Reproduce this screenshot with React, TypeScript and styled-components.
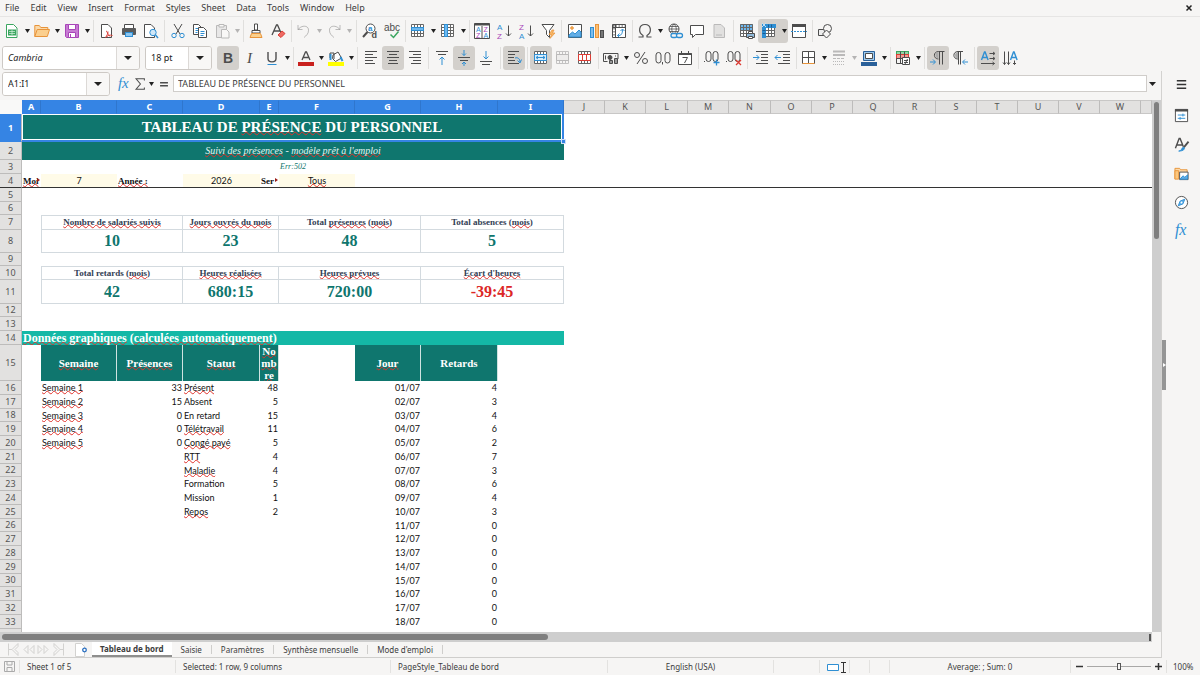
import React from 'react';
import styled, { createGlobalStyle, css } from 'styled-components';

const DARK = '#4d4d4d';
const BLUE = '#2f8fd3';
const PURPLE = '#a845b8';
const RED = '#dc3c34';
const ORANGE = '#e8943a';
const GREEN = '#3ba660';
const TEAL = '#0f766e';
const SANS = '"Noto Sans", "Open Sans", sans-serif';
const SERIF = '"Liberation Serif", serif';

const GlobalStyle = createGlobalStyle`
  *, *::before, *::after { box-sizing: border-box; }
  body {
    margin: 0;
    background: #f6f5f4;
    color: #3c3c3c;
    font-family: ${SANS};
    font-size: 9px;
    line-height: 12px;
  }
  button, input { font: inherit; color: inherit; margin: 0; padding: 0; border: 0; background: none; }
`;

/* ---------- shell ---------- */

const Window = styled.div`
  display: flex;
  flex-direction: column;
  height: 100vh;
  min-height: 400px;
  overflow: hidden;
`;

const MenuBar = styled.nav`
  display: flex;
  align-items: center;
  gap: 1px;
  height: 17px;
  flex: none;
  padding: 0 6px 0 0;
  border-bottom: 1px solid #e6e5e4;
`;

const MenuItem = styled.button`
  padding: 0 5px;
  height: 16px;
  white-space: nowrap;
`;

const CloseButton = styled.button`
  margin-left: auto;
  width: 10px;
  height: 16px;
  display: grid;
  place-items: center;
`;

const Toolbar = styled.div<{ $inset: number }>`
  display: flex;
  align-items: center;
  flex: none;
  height: 27px;
  padding-left: ${(p) => p.$inset}px;
  overflow: hidden;
`;

const ToolButton = styled.button<{ $active?: boolean; $joined?: boolean }>`
  flex: none;
  width: 22px;
  height: 24px;
  display: grid;
  place-items: center;
  border-radius: ${(p) => (p.$joined ? '3px 0 0 3px' : '3px')};
  background: ${(p) => (p.$active ? '#d3d0cc' : 'transparent')};
`;

const ArrowButton = styled.button<{ $active?: boolean; $dim?: boolean }>`
  flex: none;
  width: 8px;
  height: 24px;
  display: grid;
  place-items: center;
  opacity: ${(p) => (p.$dim ? 0.3 : 1)};
  border-radius: 0 3px 3px 0;
  background: ${(p) => (p.$active ? '#d3d0cc' : 'transparent')};
`;

const Separator = styled.span<{ $w: number }>`
  flex: none;
  width: ${(p) => p.$w}px;
  height: 22px;
  background: linear-gradient(#e0dfdd, #e0dfdd) center / 1px 100% no-repeat;
`;

const Combo = styled.div<{ $w: number; $gap: number }>`
  display: flex;
  flex: none;
  width: ${(p) => p.$w}px;
  height: 24px;
  margin-right: ${(p) => p.$gap}px;
  border: 1px solid #cdc9c5;
  border-radius: 3px;
  overflow: hidden;
`;

const ComboInput = styled.input<{ $italic?: boolean }>`
  flex: 1;
  min-width: 0;
  padding: 0 5px;
  background: #fff;
  color: #222;
  font-style: ${(p) => (p.$italic ? 'italic' : 'normal')};
`;

const ComboButton = styled.button`
  width: 23px;
  border-left: 1px solid #dcd9d6;
  background: #f8f7f6;
  display: grid;
  place-items: center;
`;

const Main = styled.div`
  display: flex;
  flex: 1;
  min-height: 0;
`;

const Workspace = styled.div`
  display: flex;
  flex-direction: column;
  flex: 1;
  min-width: 0;
`;

const FormulaBar = styled.div`
  display: flex;
  align-items: center;
  flex: none;
  height: 29px;
  padding: 0 5px 4px 2px;
`;

const FormulaTool = styled.button<{ $w: number }>`
  flex: none;
  width: ${(p) => p.$w}px;
  height: 20px;
  display: grid;
  place-items: center;
`;

const FormulaInput = styled.input`
  flex: 1;
  min-width: 0;
  height: 17px;
  padding: 0 4px;
  margin-right: 1px;
  background: #fff;
  border: 1px solid #d0cdca;
`;

/* ---------- sheet ---------- */

const SheetRow = styled.div`
  display: flex;
  flex: 1;
  min-height: 0;
`;

const SheetView = styled.div`
  flex: 1;
  min-width: 0;
  overflow: hidden;
  background: #fff;
`;

const VerticalTrack = styled.div`
  flex: none;
  width: 9px;
  padding: 2px;
  background: #cecece;
`;

const VerticalThumb = styled.div`
  width: 5px;
  height: 26%;
  border-radius: 3px;
  background: #7f7f7f;
`;

const HorizontalTrack = styled.div`
  flex: none;
  display: flex;
  align-items: center;
  justify-content: space-between;
  height: 10px;
  margin-right: 9px;
  padding: 0 1px 0 2px;
  background: #cecece;
`;

const HorizontalThumb = styled.div`
  width: 47.5%;
  height: 6px;
  border-radius: 3px;
  background: #7f7f7f;
`;

const SplitMark = styled.span`
  width: 2px;
  height: 7px;
  background: #555;
`;

const Grid = styled.table`
  width: 100%;
  table-layout: fixed;
  border-spacing: 0;
  font-family: Lato, sans-serif;
  font-size: 9px;
  line-height: 12px;
  color: #111;
`;

const ColumnHead = styled.th<{ $selected?: boolean }>`
  height: 14px;
  padding: 0;
  font: 9px/12px ${SANS};
  color: #555;
  background: #e2e1e0;
  border-right: 1px solid #bdbcbb;
  border-bottom: 1px solid #c8c7c6;
  border-top: 1px solid #c8c7c6;
  overflow: hidden;
  ${(p) => p.$selected && css`
    font-weight: 700;
    color: #fff;
    background: #3584e4;
    border-color: #3584e4;
    border-right-color: #2f76cd;
  `}
`;

const Corner = styled.td`
  padding: 0;
  background: #f9f9f8;
`;

const RowHead = styled.th<{ $selected?: boolean }>`
  padding: 0;
  font: ${(p) => (p.$selected ? 700 : 400)} 9px/12px ${SANS};
  color: ${(p) => (p.$selected ? '#fff' : '#555')};
  background: ${(p) => (p.$selected ? '#3584e4' : '#e2e1e0')};
  border-right: 1px solid #bdbcbb;
  border-bottom: 1px solid ${(p) => (p.$selected ? '#3584e4' : '#bdbcbb')};
`;

const Row = styled.tr<{ $h: number; $frozen?: boolean }>`
  height: ${(p) => p.$h}px;
  ${(p) => p.$frozen && css`
    & > * { border-bottom: 1px solid #333; }
  `}
`;

const Cell = styled.td<{ $align?: 'left' | 'center' | 'right' }>`
  padding: 0 1px;
  text-align: ${(p) => p.$align ?? 'left'};
  white-space: nowrap;
  overflow: hidden;
`;

const TitleCell = styled(Cell)`
  position: relative;
  overflow: visible;
  background: ${TEAL};
  color: #fff;
  font: 700 15px/20px ${SERIF};
  box-shadow: inset 0 0 0 1px #fff;
  border-right: 2px solid #3584e4;
  border-bottom: 2px solid #3584e4;
`;

const FillHandle = styled.span`
  position: absolute;
  right: -4px;
  bottom: -4px;
  width: 5px;
  height: 5px;
  background: #3584e4;
  border: 1px solid #cfe0f7;
`;

const SubtitleCell = styled(Cell)`
  background: ${TEAL};
  color: #e3f4f2;
  font: italic 10px/12px ${SERIF};
`;

const ErrorCell = styled(Cell)`
  color: ${TEAL};
  font: italic 8px/12px ${SERIF};
`;

const FilterLabel = styled(Cell)`
  position: relative;
  font: 700 9px/12px ${SERIF};
`;

/* Marks a label that is wider than its column. */
const OverflowMark = styled.span`
  position: absolute;
  right: 1px;
  top: 4px;
  border: solid transparent;
  border-width: 2px 0 2px 3px;
  border-left-color: #9b1c16;
`;

const FilterValue = styled(Cell)`
  background: #fffbe8;
`;

const KpiLabel = styled(Cell)<{ $first?: boolean }>`
  color: #334155;
  font: 700 9px/11px ${SERIF};
  border: solid #d3dadf;
  border-width: 1px 1px 1px ${(p) => (p.$first ? 1 : 0)}px;
`;

const KpiValue = styled(KpiLabel)<{ $negative?: boolean }>`
  color: ${(p) => (p.$negative ? '#dc2626' : TEAL)};
  font-size: 16px;
  line-height: 20px;
  border-top-width: 0;
`;

const SectionCell = styled(Cell)`
  background: #14b8a6;
  color: #fff;
  font: 700 12px/13px ${SERIF};
`;

const DataHead = styled(Cell)`
  background: ${TEAL};
  color: #fff;
  font: 700 11px/12px ${SERIF};
  border: solid #cfe3e1;
  border-width: 0 1px 0 0;
  white-space: normal;
  word-break: break-all;
`;

const Misspelt = styled.span`
  text-decoration: underline wavy #e0322b 1px;
  text-decoration-skip-ink: none;
  text-underline-offset: -1px;
`;

/* ---------- side and bottom bars ---------- */

const Splitter = styled.div`
  flex: none;
  display: flex;
  align-items: center;
  width: 5px;
  border-left: 1px solid #d3d2d0;
`;

const SplitterHandle = styled.button`
  width: 4px;
  height: 50px;
  display: grid;
  place-items: center;
  background: #959595;
`;

const Sidebar = styled.aside`
  flex: none;
  width: 34px;
  display: flex;
  flex-direction: column;
  align-items: center;
  gap: 5px;
  padding: 1px 4px 0 0;
  & > :first-child { margin-bottom: 2px; }
`;

const TabBar = styled.div`
  display: flex;
  align-items: stretch;
  flex: none;
  height: 16px;
  padding-left: 6px;
  font-size: 8px;
  border-bottom: 1px solid #cfcecc;
`;

const TabNav = styled.button`
  width: 15px;
  display: grid;
  place-items: center;
`;

const AddSheet = styled.button`
  width: 26px;
  padding-left: 3px;
  display: grid;
  place-items: center;
`;

const Tab = styled.button<{ $active?: boolean }>`
  padding: 0 10px 0 9px;
  white-space: nowrap;
  ${(p) => p.$active ? css`
    padding: 0 8px;
    font-weight: 700;
    background: #fff;
    border-bottom: 2px solid #8e8e8d;
  ` : css`
    background: linear-gradient(#cfcecc, #cfcecc) right center / 1px 9px no-repeat;
  `}
`;

const StatusBar = styled.footer`
  display: grid;
  grid-template-columns: 20px 156px 215px 217px 166px 46px 30px 20px 20px 1fr 96px 33px;
  align-items: center;
  flex: none;
  height: 17px;
  font-size: 8px;
`;

const StatusItem = styled.div<{ $center?: boolean }>`
  height: 13px;
  padding: 0 7px;
  display: flex;
  align-items: center;
  justify-content: ${(p) => (p.$center ? 'center' : 'flex-start')};
  border-right: 1px solid #e3e2e0;
  white-space: nowrap;
  &:last-child { border: 0; padding: 0 6px; }
`;

const ZoomControl = styled.div`
  display: flex;
  align-items: center;
  justify-content: space-between;
  height: 13px;
  padding: 0 4px;
  border-right: 1px solid #e3e2e0;
`;

const ZoomSlider = styled.input`
  appearance: none;
  width: 64px;
  height: 12px;
  background: linear-gradient(#a9a8a7, #a9a8a7) center / 100% 1px no-repeat;
  &::-webkit-slider-thumb {
    appearance: none;
    width: 4px;
    height: 7px;
    background: #f6f5f4;
    border: 1px solid #555;
  }
`;

const ZoomStep = styled.button`
  display: grid;
  place-items: center;
  width: 8px;
  height: 12px;
`;

/* ---------- icons ---------- */

const Svg = styled.svg<{ $dim?: boolean }>`
  display: block;
  overflow: visible;
  opacity: ${(p) => (p.$dim ? 0.35 : 1)};
  text { stroke: none; font-family: "Liberation Sans", sans-serif; }
  .serif { font-family: ${SERIF}; }
`;

type Drawing = React.ReactNode;

const page = (x = 2.5, y = 1.5, w = 10, h = 13) => (
  <path d={`M${x} ${y}h${w - 3.5}l3.5 3.5v${h - 3.5}h-${w}z`} fill="#fff" />
);
const lines = (rows: [number, number, number][]) => (
  <path d={rows.map(([x, y, w]) => `M${x} ${y}h${w}`).join('')} />
);
/* A 12 by 12 sheet of four columns and four rows. */
const sheetGrid = (stroke = '#666') => (
  <path d="M1.500 1.500h12v12h-12zM1.500 4.500h12M1.500 7.500h12M1.500 10.500h12M4.500 1.500v12M7.500 1.500v12M10.500 1.500v12" stroke={stroke} />
);
const sheetPaper = <rect x="1" y="1" width="13" height="13" fill="#fff" stroke="none" />;
const sortArrow = <path d="M12.500 2.500v10.500M10 10.500l2.500 2.500 2.500-2.500" />;

const drawings: Record<string, Drawing> = {
  new: <g><path d="M2.500 1.500h7l3.500 3.500v9.500h-10.500z" fill="#fff" stroke={GREEN} /><rect x="4" y="6.500" width="8" height="6" fill={GREEN} stroke="none" /><path d="M5 8.500h6M5 10.500h6M8 7v5" stroke="#d9f2df" strokeWidth=".7" /></g>,
  open: <g stroke={ORANGE}><path d="M.8 13.500v-11h4.500l1.500 2h7v2.500" fill="#fbd9a8" /><path d="M.8 13.500l2.400-7h12.300l-2.200 7z" fill="#fbcf8e" /></g>,
  save: <g stroke={PURPLE}><path d="M1.500 1.500h13v13h-12l-1-1z" fill="#c77bd3" /><path d="M4.500 1.500h7v5h-7z" fill="#fff" /><path d="M4.500 9.500h7v5h-7z" fill="#fff" /><path d="M6.500 11v3" /></g>,
  pdf: <g>{page()}<path d="M7 8c1.500 0 1 3 4 5.500M13.500 12.500c-3-1-5 0-6.500 2M9 8.500c0 2-1 4-2.500 6" stroke={RED} /></g>,
  print: <g><path d="M3.500 5v-3.500h9v3.500" fill="#fff" /><rect x="1" y="5" width="14" height="7" rx="1" fill="#5a5a5a" stroke="none" /><rect x="4.500" y="9.500" width="7" height="4" fill="#8cc5ef" stroke={BLUE} /></g>,
  preview: <g>{page(1.5)}<circle cx="10" cy="9.500" r="3.200" fill="#cfe7f8" stroke={BLUE} /><path d="M12.500 12l2.500 3" stroke={BLUE} strokeWidth="1.500" /></g>,
  cut: <g><path d="M4 1l6 10M12 1l-6 10" /><circle cx="4" cy="12.500" r="2.200" stroke={BLUE} /><circle cx="12" cy="12.500" r="2.200" stroke={BLUE} /></g>,
  copy: <g><path d="M1.500 1.500h5l3 3v7h-8z" fill="#fff" /><path d="M3.500 5.500h3M3.500 7.500h3M3.500 9.500h2" stroke={BLUE} /><path d="M6.500 4.500h5l3 3v7h-8z" fill="#fff" /><path d="M8.500 8.500h4M8.500 10.500h4M8.500 12.500h3" stroke={BLUE} /></g>,
  paste: <g><path d="M2.500 2.500h10v12h-10z" fill="#d0d0d0" /><path d="M5 1.500h5v2.500h-5z" fill="#fff" /><path d="M7.500 6.500h5l2.500 2.500v6h-7.500z" fill="#fff" /></g>,
  brush: <g><path d="M6.500 1h3v6h-3z" fill="#fff" /><path d="M4 7.500h8v2.500h-8z" fill="#fff" /><path d="M3.500 10.500h9l1.500 4h-12z" fill="#fbd08d" stroke={ORANGE} /></g>,
  clear: <g><path d="M2 12l4.500-10h1l4 9M4 8h6" strokeWidth="1.300" /><path d="M8 12l4-4 3 2.500-4 4z" fill="#ee6b64" stroke={RED} /></g>,
  undo: <path d="M2 6.500c4-5 11-4 10.500 1 0 3-2 5-4.500 7M2 2v4.500h4.500" />,
  redo: <path d="M14 6.500c-4-5-11-4-10.500 1 0 3 2 5 4.500 7M14 2v4.500h-4.500" />,
  find: <g><circle cx="8.500" cy="5.500" r="4.500" fill="#fff" /><path d="M5.500 9l-4.500 5" strokeWidth="2" /><text x="6" y="7.500" fontSize="8" fill={BLUE} fontWeight="700">a</text><text x="9.500" y="15" fontSize="9" fill={DARK} fontWeight="700">d</text></g>,
  spell: <g><text x="0" y="8" fontSize="10" fill={DARK}>abc</text><path d="M6.500 11.500l3 3 5-6" stroke={GREEN} strokeWidth="1.500" /></g>,
  rows: <g>{sheetPaper}{sheetGrid()}<rect x="1.500" y="4.500" width="12" height="3" fill="#6db8ef" stroke={BLUE} /></g>,
  cols: <g>{sheetPaper}{sheetGrid()}<rect x="4.500" y="1.500" width="3" height="12" fill="#6db8ef" stroke={BLUE} /></g>,
  sort: <g><path d="M.5.500h15v15h-15zM8 3v12" fill="#fff" /><path d="M.5 1.500h15" strokeWidth="2" /><g fontSize="7"><text x="2" y="8.500" fill={BLUE}>A</text><text x="2" y="15" fill={PURPLE}>Z</text><text x="9.500" y="8.500" fill={PURPLE}>Z</text><text x="9.500" y="15" fill={BLUE}>A</text></g></g>,
  asc: <g fontSize="8"><text x="1" y="6.500" fill={BLUE}>A</text><text x="1" y="15.500" fill={PURPLE}>Z</text>{sortArrow}</g>,
  desc: <g fontSize="8"><text x="1" y="6.500" fill={PURPLE}>Z</text><text x="1" y="15.500" fill={BLUE}>A</text>{sortArrow}</g>,
  filter: <g><path d="M2 1.500h12l-4.500 6v7l-3-3v-4z" fill="#fff" /><path d="M12 7l-3 4.500h2.500l-1.500 4 5-5.500h-2.500l1.500-3z" fill="#f8b563" stroke={ORANGE} strokeWidth=".7" /></g>,
  image: <g><path d="M1.500 1.500h13v13h-13z" fill="#fff" /><path d="M2 14v-2l3.500-3 2.500 2 4-4 2 2v5z" fill="#63aee6" stroke={BLUE} /><circle cx="5" cy="5" r="1.300" fill="#f8b563" stroke={ORANGE} /></g>,
  chart: <g><rect x="1.500" y="4.500" width="3" height="10" fill="#7dbdec" stroke={BLUE} /><rect x="6.500" y="1.500" width="3" height="13" fill="#fbc076" stroke={ORANGE} /><rect x="11.500" y="7.500" width="3" height="7" fill="#777" stroke={DARK} /></g>,
  pivot: <g><path d="M1.500 1.500h13v13h-13z" fill="#fff" /><path d="M1.500 4.500h13M4.500 1.500v13" /><path d="M1.500 3h13M3 2v12" strokeDasharray="1.500 1.500" /><path d="M6.500 12.500c4 .5 5-2 5-6M9.500 8l2-2 2 2M8.500 10.500l-2 2 2 2" stroke={BLUE} /></g>,
  omega: <path d="M1.500 14h4.500v-1.500c-5-3-4.500-11 2-11s7 8 2 11v1.500h4.500" strokeWidth="1.200" />,
  link: <g><circle cx="7" cy="6" r="5" fill="#fff" /><path d="M2 6h10M3 3.500h8M3 8.500h8M7 1c-3 3-3 7 0 10M7 1c3 3 3 7 0 10" strokeWidth=".8" /><g stroke={BLUE} strokeWidth="1.300" fill="#f6f5f4"><rect x="4" y="10.500" width="6" height="4" rx="2" /><rect x="9.500" y="10.500" width="6" height="4" rx="2" /></g></g>,
  comment: <path d="M1.500 2.500h13v9h-8l-3 3v-3h-2z" fill="#fff" />,
  headers: <g><path d="M3 1.500h7l3.500 3.500v9.500h-10.500z" fill="#bbb" /><path d="M5 12h6" /></g>,
  printArea: <g>{sheetPaper}<rect x="1" y="1" width="13" height="6" fill="#6db8ef" stroke="none" />{sheetGrid()}<path d="M7.500 10.500h8v4h-8z" fill="#8fb9da" /><path d="M9.500 8.500h4v2h-4zM9.500 13.500h4v2h-4z" fill="#fff" /></g>,
  freeze: <g>{sheetPaper}{sheetGrid()}<path d="M1 1h14v4h-10v10h-4z" fill={BLUE} stroke="none" /><path d="M1.500 7.500h3M1.500 10.500h3M7.500 1.500v3M10.500 1.500v3" stroke="#1c5c93" /><path d="M1 0l4 4M5 0l-4 4" stroke="#bfe0f7" /></g>,
  split: <g><path d="M1.500 1.500h13v13h-13z" fill="#fff" /><path d="M1 2.500h14" strokeWidth="3" /><path d="M0 8.500h16" stroke={BLUE} strokeDasharray="2 1" /></g>,
  draw: <g><path d="M1.500 6.500h6v6h-6z" fill="#eee" /><circle cx="10.500" cy="5.500" r="4" fill="#f6f5f4" /><path d="M9.500 7l4 4-4 4-4-4z" fill="#f6f5f4" /></g>,
  bold: <text x="3" y="13" fontSize="14" fontWeight="700" fill={DARK}>B</text>,
  italic: <text className="serif" x="5" y="13" fontSize="15" fontStyle="italic" fill={DARK}>I</text>,
  underline: <g><path d="M4 2v6.500c0 4.500 8 4.500 8 0v-6.500" strokeWidth="1.400" /><path d="M3.500 14.500h9" stroke={BLUE} /></g>,
  fontColor: <g><path d="M4 10l3.500-8h1l3.500 8M5 7.500h6" strokeWidth="1.300" /><rect x="0" y="12" width="16" height="4" fill="#c9211e" stroke="none" /></g>,
  fill: <g><path d="M5 5l5-3 3.500 6-6 3.500-3-3z" fill="#fff" /><path d="M2 8v-5h4v6" /><path d="M12.500 7l2 4" stroke={BLUE} strokeWidth="2" /><path d="M2.500 4v6" stroke={BLUE} strokeWidth="2" /><rect x="0" y="12" width="16" height="4" fill="#ffff00" stroke="none" /></g>,
  left: lines([[2, 1.5, 12], [2, 4.5, 8], [2, 7.5, 12], [2, 10.5, 8], [2, 13.5, 10]]),
  center: lines([[2, 1.5, 12], [4, 4.5, 8], [2, 7.5, 12], [4, 10.5, 8], [3, 13.5, 10]]),
  right: lines([[2, 1.5, 12], [6, 4.5, 8], [2, 7.5, 12], [6, 10.5, 8], [4, 13.5, 10]]),
  top: <g>{lines([[2, 1.5, 12], [4, 4.5, 8]])}<path d="M8 15v-8M5.500 9.500l2.500-2.500 2.500 2.500" stroke={BLUE} /></g>,
  middle: <g>{lines([[2, 7.5, 12], [4, 10.5, 8]])}<path d="M8 0v5.500M6 3.500l2 2 2-2M8 16v-4M6 14l2-2 2 2" stroke={BLUE} /></g>,
  bottom: <g>{lines([[2, 11.5, 12], [4, 14.5, 8]])}<path d="M8 1v8M5.500 6.500l2.500 2.500 2.500-2.500" stroke={BLUE} /></g>,
  wrap: <g>{lines([[2, 1.5, 11], [2, 4.5, 7], [2, 7.5, 6], [2, 10.5, 7], [2, 13.5, 11]])}<path d="M9 8c3-1 5 1 5 4M11.500 10.500l2.500 2.500 1.500-3.500" stroke={BLUE} /></g>,
  merge: <g>{sheetPaper}{sheetGrid()}<path d="M1.500 4.500h12v6h-12z" fill="#d9edfb" stroke={BLUE} /><path d="M3 7.500h9M5 6l-2 1.500 2 1.500M10 6l2 1.500-2 1.500" stroke={BLUE} /></g>,
  mergeOnly: <g>{sheetGrid()}<path d="M1.500 4.500h12v6h-12z" fill="#ddd" /></g>,
  unmerge: <g>{sheetPaper}{sheetGrid()}<path d="M1.500 4.500h12v6h-12zM5.500 4.500v6M9.500 4.500v6" stroke={RED} fill="#fff" /></g>,
  currency: <g><path d="M15 9v-5.500h-14.500v8h4" /><circle cx="7" cy="7.500" r="2" fill={DARK} /><path d="M6.500 13.500v-3h3v3zM11.500 13.500v-5h3v5z" fill="#999" /><path d="M2.500 5.500v4M12.500 5.500v1" /></g>,
  percent: <g><circle cx="4" cy="5" r="2.500" /><circle cx="12" cy="11" r="2.500" /><path d="M12 2l-8 12" /></g>,
  number: <g><rect x="1" y="2.500" width="5" height="10.500" rx="2.500" /><rect x="10" y="2.500" width="5" height="10.500" rx="2.500" /><path d="M7.500 12v2.500" /></g>,
  date: <g><path d="M1.500 3.500h13v11h-13zM4.500 1v2M11.500 1v2" fill="#fff" /><path d="M1.500 4h13" strokeWidth="2" /><path d="M5.500 7.500h5l-3 5.500" /></g>,
  addDec: <g><rect x="2" y="1.500" width="5" height="10" rx="2.500" /><rect x="9" y="1.500" width="5" height="10" rx="2.500" /><path d="M0 11.500h1" /><path d="M12.500 9.500v6M9.500 12.500h6" stroke={BLUE} strokeWidth="1.300" /></g>,
  delDec: <g><rect x="2" y="1.500" width="5" height="10" rx="2.500" /><rect x="9" y="1.500" width="5" height="10" rx="2.500" /><path d="M0 11.500h1" /><path d="M10 10l5 5M15 10l-5 5" stroke={RED} strokeWidth="1.300" /></g>,
  indent: <g>{lines([[3, 1.5, 12], [8, 4.5, 7], [8, 7.5, 7], [8, 10.5, 7], [3, 13.5, 12]])}<path d="M0 7.500h6M3.500 5l2.500 2.500-2.500 2.500" stroke={BLUE} /></g>,
  outdent: <g>{lines([[3, 1.5, 12], [8, 4.5, 7], [8, 7.5, 7], [8, 10.5, 7], [3, 13.5, 12]])}<path d="M6 7.500h-6M2.500 5l-2.500 2.500 2.500 2.500" stroke={BLUE} /></g>,
  borders: <g><path d="M1.500 1.500h12v12h-12z" fill="#fff" /><path d="M7.500 1.500v12M1.500 7.500h12" /><path d="M1.500 13.500h12" stroke={ORANGE} /></g>,
  lineStyle: <g><path d="M2 1.500h12M2 5h12" strokeWidth="2" /><path d="M2 8.500h12" strokeDasharray="3 1" /><path d="M2 11.500h12M2 14.500h12" strokeDasharray="1 1" /></g>,
  borderColor: <g><path d="M2.500 1.500h11v9h-11z" fill="#9cc9ee" stroke="#2a6099" /><path d="M4.500 3.500h7v5h-7z" fill="#fff" /><rect x="0" y="12" width="16" height="4" fill="#2a6099" stroke="none" /></g>,
  conditional: <g><rect x="1.500" y="1.500" width="12" height="3" fill="#8fd6a4" stroke={GREEN} /><rect x="1.500" y="4.500" width="12" height="4" fill="#f39c95" stroke={RED} /><path d="M1.500 8.500h6v5h-6zM5.500 1.500v12M9.500 1.500v7" /><path d="M7.500 7.500h7v7h-7z" fill="#fff" /><path d="M9 10.500h4M9 12.500h4M12.500 9l-2.500 5" /></g>,
  ltr: <g><path d="M8.500 9c-5.500 0-5.500-7.500 0-7.500h6M9.500 1.500v13M12.500 1.500v13" /><path d="M8.500 2c-4 0-4 6.500 0 6.500z" fill="#aaa" stroke="none" /><path d="M0 12h5M3 9.500l2.500 2.500-2.500 2.500" stroke={BLUE} /></g>,
  rtl: <g><path d="M6 9c-5.500 0-5.500-7.500 0-7.500h5M6.500 1.500v13M8.500 1.500v13" /><path d="M6 2c-4 0-4 6.500 0 6.500z" fill="#aaa" stroke="none" /><path d="M16 12h-5M13 9.500l-2.500 2.500 2.500 2.500" stroke={BLUE} /></g>,
  textLtr: <g><path d="M1.500 10l3-8h.6l3 8M2.500 7.500h4.500" stroke={BLUE} strokeWidth="1.400" /><path d="M9.500 3.500h5M13 2l2 1.500-2 1.500M9.500 8.500h5M13 7l2 1.500-2 1.500M1 13.500h13.500M12.500 12l2 1.500-2 1.500" /></g>,
  textTtb: <g><path d="M8.500 10l3-8h.6l3 8M9.500 7.500h4.500" stroke={BLUE} strokeWidth="1.400" /><path d="M2.500 1.500v13M1 12.500l1.500 2 1.500-2M6.500 1.500v13M5 12.500l1.500 2 1.500-2M12.500 10.500v4M11 13l1.500 1.500 1.500-1.500" /></g>,
  fx: <text className="serif" x="1" y="12" fontSize="17" fontStyle="italic" fill={BLUE}>fx</text>,
  sum: <path d="M13 4v-2h-9.500l5 6-5 6h9.500v-2" strokeWidth="1.200" />,
  equals: <path d="M3.500 6.500h9M3.500 10h9" strokeWidth="1.600" />,
  menu: <path d="M3 4h10M3 8h10M3 12h10" stroke="#333" strokeWidth="1.600" />,
  properties: <g><path d="M1.500 1.500h13v13h-13z" fill="#fff" /><path d="M1 2.500h14" strokeWidth="2.500" /><path d="M4 7.500h8M4 11h8M9.500 6v3M6.500 9.500v3" stroke={BLUE} /></g>,
  styles: <g><path d="M1.500 12l4-10.500h1l3.500 9M3 8.500h6" strokeWidth="1.500" /><path d="M15.500 5l-5 6" strokeWidth="2" /><path d="M5 15c4-.5 3-4 5-4s2 4-5 4z" fill={BLUE} stroke={BLUE} /></g>,
  gallery: <g><path d="M1 14v-11.500h5l1 1.500h7v3" fill="#fcd9aa" stroke={ORANGE} /><path d="M1 14v-9h4v9z" fill="#fbc77f" stroke={ORANGE} /><path d="M6 6.500h9v8h-9z" fill="#fff" /><path d="M6.500 14l3-3.500 2 1.500 3-2.500v4.500z" fill="#63aee6" stroke={BLUE} /></g>,
  navigator: <g><circle cx="8" cy="8" r="6.500" fill="#fff" /><path d="M11.500 4.500l-2 5-5 2 2-5z" fill="#63b1ea" stroke={BLUE} /><circle cx="8" cy="8" r="1" fill="#fff" stroke="none" /></g>,
};

const Icon = ({ name, size = 16, dim }: { name: string; size?: number; dim?: boolean }) => (
  <Svg width={size} height={size} viewBox="0 0 16 16" fill="none" stroke={DARK} strokeWidth="1" $dim={dim} aria-hidden="true">
    {drawings[name]}
  </Svg>
);

const Caret = ({ width = 5 }: { width?: number }) => (
  <Svg width={width} height="4" viewBox="0 0 8 5" preserveAspectRatio="none" aria-hidden="true"><path d="M0 0h8l-4 5z" fill="#222" /></Svg>
);

/* ---------- toolbars ---------- */

type Tool = { icon: string; label: string; menu?: boolean; active?: boolean; dim?: boolean } | number;

/* Flags: m = has a menu arrow, a = switched on, d = disabled. A bare number is a separator's width. */
const t = (icon: string, label: string, flags = ''): Tool => ({
  icon, label, menu: flags.includes('m'), active: flags.includes('a'), dim: flags.includes('d'),
});

const standardTools: Tool[] = [
  t('new', 'New', 'm'), t('open', 'Open', 'm'), t('save', 'Save', 'm'), 5,
  t('pdf', 'Export as PDF'), t('print', 'Print'), t('preview', 'Print Preview'), 5,
  t('cut', 'Cut'), t('copy', 'Copy'), t('paste', 'Paste', 'md'), 4,
  t('brush', 'Clone Formatting'), t('clear', 'Clear Direct Formatting'), 4,
  t('undo', 'Undo', 'md'), t('redo', 'Redo', 'md'), 6,
  t('find', 'Find and Replace'), t('spell', 'Spelling'), 4,
  t('rows', 'Row', 'm'), t('cols', 'Column', 'm'), 4,
  t('sort', 'Sort'), t('asc', 'Sort Ascending'), t('desc', 'Sort Descending'), t('filter', 'AutoFilter'), 5,
  t('image', 'Insert Image'), t('chart', 'Insert Chart'), t('pivot', 'Insert Pivot Table'), 4,
  t('omega', 'Special Character', 'm'), t('link', 'Insert Hyperlink'), t('comment', 'Insert Comment'), t('headers', 'Headers and Footers', 'd'), 6,
  t('printArea', 'Define Print Area'), t('freeze', 'Freeze Rows and Columns', 'ma'), t('split', 'Split Window'), 4,
  t('draw', 'Show Draw Functions'),
];

const formattingTools: Tool[] = [
  t('bold', 'Bold', 'a'), t('italic', 'Italic'), t('underline', 'Underline', 'm'), 4,
  t('fontColor', 'Font Color', 'm'), t('fill', 'Background Color', 'm'), 5,
  t('left', 'Align Left'), t('center', 'Center Horizontally', 'a'), t('right', 'Align Right'), 5,
  t('top', 'Align Top'), t('middle', 'Center Vertically', 'a'), t('bottom', 'Align Bottom'), 6,
  t('wrap', 'Wrap Text', 'a'), 5,
  t('merge', 'Merge and Center Cells', 'a'), t('mergeOnly', 'Merge Cells', 'd'), t('unmerge', 'Unmerge Cells'), 4,
  t('currency', 'Format as Currency', 'm'), t('percent', 'Format as Percent'), t('number', 'Format as Number'), t('date', 'Format as Date'), 5,
  t('addDec', 'Add Decimal Place'), t('delDec', 'Delete Decimal Place'), 5,
  t('indent', 'Increase Indent'), t('outdent', 'Decrease Indent'), 4,
  t('borders', 'Borders', 'm'), t('lineStyle', 'Border Style', 'md'), t('borderColor', 'Border Color', 'm'), 4,
  t('conditional', 'Conditional', 'm'), 5,
  t('ltr', 'Left-To-Right', 'a'), t('rtl', 'Right-To-Left'), 6,
  t('textLtr', 'Text direction from left to right', 'a'), t('textTtb', 'Text direction from top to bottom'),
];

const Tools = ({ items }: { items: Tool[] }) => (
  <>
    {items.map((item, i) => typeof item === 'number' ? <Separator key={i} $w={item} /> : (
      <React.Fragment key={i}>
        <ToolButton type="button" aria-label={item.label} $active={item.active} $joined={item.menu}>
          <Icon name={item.icon} dim={item.dim} />
        </ToolButton>
        {item.menu && (
          <ArrowButton type="button" aria-label={`${item.label} options`} $active={item.active} $dim={item.dim}><Caret /></ArrowButton>
        )}
      </React.Fragment>
    ))}
  </>
);

const ComboBox = ({ label, value, width, gap, italic }: { label: string; value: string; width: number; gap: number; italic?: boolean }) => (
  <Combo $w={width} $gap={gap}>
    <ComboInput aria-label={label} defaultValue={value} $italic={italic} />
    <ComboButton type="button" aria-label={`${label} list`}><Caret width={8} /></ComboButton>
  </Combo>
);

/* ---------- sheet data ---------- */

const columns: [string, number][] = [
  ['A', 19], ['B', 76], ['C', 66], ['D', 77], ['E', 19], ['F', 76], ['G', 66], ['H', 77], ['I', 66],
  ['J', 41], ['K', 41], ['L', 42], ['M', 41], ['N', 42], ['O', 41], ['P', 41], ['Q', 41], ['R', 42],
  ['S', 41], ['T', 41], ['U', 41], ['V', 41], ['W', 41],
];

const weeks: [string, number][] = [['Semaine 1', 33], ['Semaine 2', 15], ['Semaine 3', 0], ['Semaine 4', 0], ['Semaine 5', 0]];
const statuses: [string, number, boolean][] = [
  ['Présent', 48, true], ['Absent', 5, false], ['En retard', 15, false], ['Télétravail', 11, true], ['Congé payé', 5, true],
  ['RTT', 4, true], ['Maladie', 4, true], ['Formation', 5, false], ['Mission', 1, false], ['Repos', 2, true],
];
const lateness = [4, 3, 4, 6, 2, 7, 3, 6, 4, 3, 0, 0, 0, 0, 0, 0, 0, 0];

const M = Misspelt;

type Kpi = { label: React.ReactNode; value: string; negative?: boolean };
const kpis: Kpi[][] = [
  [
    { label: <M>Nombre de salariés suivis</M>, value: '10' },
    { label: <M>Jours ouvrés du mois</M>, value: '23' },
    { label: <>Total <M>présences</M> (<M>mois</M>)</>, value: '48' },
    { label: <>Total absences (<M>mois</M>)</>, value: '5' },
  ],
  [
    { label: <>Total retards (<M>mois</M>)</>, value: '42' },
    { label: <M>Heures réalisées</M>, value: '680:15' },
    { label: <M>Heures prévues</M>, value: '720:00' },
    { label: <M>Écart d'heures</M>, value: '-39:45', negative: true },
  ],
];

const BlankRow = ({ n, h }: { n?: number; h: number }) => (
  <Row $h={h}><RowHead scope="row">{n}</RowHead><Cell colSpan={24} /></Row>
);

const KpiRows = ({ from, heights, items }: { from: number; heights: [number, number]; items: Kpi[] }) => (
  <>
    <Row $h={heights[0]}>
      <RowHead scope="row">{from}</RowHead><Cell />
      {items.map((k, i) => <KpiLabel key={i} colSpan={2} $align="center" $first={i === 0}>{k.label}</KpiLabel>)}
      <Cell colSpan={15} />
    </Row>
    <Row $h={heights[1]}>
      <RowHead scope="row">{from + 1}</RowHead><Cell />
      {items.map((k, i) => <KpiValue key={i} colSpan={2} $align="center" $first={i === 0} $negative={k.negative}>{k.value}</KpiValue>)}
      <Cell colSpan={15} />
    </Row>
  </>
);

const Sheet = () => (
  <Grid>
    <colgroup>
      <col width={22} />
      {columns.map(([name, w]) => <col key={name} width={w} />)}
      <col />
    </colgroup>
    <thead>
      <tr>
        <Corner />
        {columns.map(([name], i) => <ColumnHead key={name} scope="col" $selected={i < 9}>{name}</ColumnHead>)}
        <ColumnHead />
      </tr>
    </thead>
    <tbody>
      <Row $h={28}>
        <RowHead scope="row" $selected>1</RowHead>
        <TitleCell colSpan={9} $align="center">TABLEAU DE <M>PRÉSENCE</M> DU PERSONNEL<FillHandle /></TitleCell>
        <Cell colSpan={15} />
      </Row>
      <Row $h={18}>
        <RowHead scope="row">2</RowHead>
        <SubtitleCell colSpan={9} $align="center"><M>Suivi des présences</M> - <M>modèle prêt à l'emploi</M></SubtitleCell>
        <Cell colSpan={15} />
      </Row>
      <Row $h={14}>
        <RowHead scope="row">3</RowHead>
        <ErrorCell colSpan={9} $align="center">Err:502</ErrorCell>
        <Cell colSpan={15} />
      </Row>
      <Row $h={14} $frozen>
        <RowHead scope="row">4</RowHead>
        <FilterLabel><M>Moi</M><OverflowMark /></FilterLabel>
        <FilterValue $align="center">7</FilterValue>
        <FilterLabel><M>Année :</M></FilterLabel>
        <FilterValue $align="center">2026</FilterValue>
        <FilterLabel>Ser<OverflowMark /></FilterLabel>
        <FilterValue $align="center"><M>Tous</M></FilterValue>
        <Cell colSpan={18} />
      </Row>
      <BlankRow n={5} h={14} />
      <BlankRow n={6} h={13} />
      <KpiRows from={7} heights={[15, 23]} items={kpis[0]} />
      <BlankRow n={9} h={13} />
      <KpiRows from={10} heights={[14, 24]} items={kpis[1]} />
      <BlankRow n={12} h={13} />
      <BlankRow n={13} h={14} />
      <Row $h={14}>
        <RowHead scope="row">14</RowHead>
        <SectionCell colSpan={9}><M>Données graphiques</M> (<M>calculées automatiquement</M>)</SectionCell>
        <Cell colSpan={15} />
      </Row>
      <Row $h={36}>
        <RowHead scope="row">15</RowHead>
        <Cell />
        <DataHead $align="center"><M>Semaine</M></DataHead>
        <DataHead $align="center"><M>Présences</M></DataHead>
        <DataHead $align="center"><M>Statut</M></DataHead>
        <DataHead $align="center"><M>Nombre</M></DataHead>
        <Cell />
        <DataHead $align="center"><M>Jour</M></DataHead>
        <DataHead $align="center">Retards</DataHead>
        <Cell colSpan={16} />
      </Row>
      {lateness.map((late, i) => {
        const week = weeks[i];
        const status = statuses[i];
        return (
          <Row key={i} $h={i % 4 === 2 ? 13 : 14}>
            <RowHead scope="row">{16 + i}</RowHead>
            <Cell />
            <Cell>{week && <M>{week[0]}</M>}</Cell>
            <Cell $align="right">{week && week[1]}</Cell>
            <Cell>{status && (status[2] ? <M>{status[0]}</M> : status[0])}</Cell>
            <Cell $align="right">{status && status[1]}</Cell>
            <Cell />
            <Cell $align="right">{String(i + 1).padStart(2, '0')}/07</Cell>
            <Cell $align="right">{late}</Cell>
            <Cell colSpan={16} />
          </Row>
        );
      })}
      <BlankRow h={14} />
    </tbody>
  </Grid>
);

/* ---------- page ---------- */

const menus = ['File', 'Edit', 'View', 'Insert', 'Format', 'Styles', 'Sheet', 'Data', 'Tools', 'Window', 'Help'];
const tabs = ['Tableau de bord', 'Saisie', 'Paramètres', 'Synthèse mensuelle', "Mode d'emploi"];
const panels: [string, string][] = [
  ['menu', 'Sidebar Settings'], ['properties', 'Properties'], ['styles', 'Styles'],
  ['gallery', 'Gallery'], ['navigator', 'Navigator'], ['fx', 'Functions'],
];
const navPaths = [
  'M1.500.5v12M11 .5l-6 6 6 6v-3l-3-3 3-3zM5 6.500h-3',
  'M6 2.500l-4 4 4 4zM12 2.500l-4 4 4 4z',
  'M1 2.500l4 4-4 4zM7 2.500l4 4-4 4z',
  'M2 .5l6 6-6 6v-3l3-3-3-3zM11.500.5v12M8 6.500h3',
];
const navLabels = ['First Sheet', 'Previous Sheet', 'Next Sheet', 'Last Sheet'];

export default function App() {
  return (
    <Window>
      <GlobalStyle />
      <MenuBar aria-label="Menu">
        {menus.map((m) => <MenuItem key={m} type="button">{m}</MenuItem>)}
        <CloseButton type="button" aria-label="Close Document">
          <Svg width="6" height="6" viewBox="0 0 6 6" stroke="#222" strokeWidth="1.500"><path d="M.5.500l5 5M5.500.5l-5 5" /></Svg>
        </CloseButton>
      </MenuBar>
      <Toolbar role="toolbar" aria-label="Standard" $inset={1}><Tools items={standardTools} /></Toolbar>
      <Toolbar role="toolbar" aria-label="Formatting" $inset={2}>
        <ComboBox label="Font Name" value="Cambria" width={138} gap={5} italic />
        <ComboBox label="Font Size" value="18 pt" width={67} gap={5} />
        <Tools items={formattingTools} />
      </Toolbar>
      <Main>
        <Workspace>
          <FormulaBar>
            <ComboBox label="Name Box" value="A1:I1" width={108} gap={5} />
            <FormulaTool type="button" aria-label="Function Wizard" $w={18}><Icon name="fx" size={14} /></FormulaTool>
            <FormulaTool type="button" aria-label="Select Function" $w={14}><Icon name="sum" size={14} /></FormulaTool>
            <ArrowButton type="button" aria-label="Select Function options"><Caret /></ArrowButton>
            <FormulaTool type="button" aria-label="Formula" $w={18}><Icon name="equals" size={14} /></FormulaTool>
            <FormulaInput aria-label="Input line" defaultValue="TABLEAU DE PRÉSENCE DU PERSONNEL" />
            <ArrowButton type="button" aria-label="Expand Formula Bar"><Caret width={7} /></ArrowButton>
          </FormulaBar>
          <SheetRow>
            <SheetView><Sheet /></SheetView>
            <VerticalTrack><VerticalThumb /></VerticalTrack>
          </SheetRow>
          <HorizontalTrack><HorizontalThumb /><SplitMark /></HorizontalTrack>
          <TabBar>
            {navPaths.map((d, i) => (
              <TabNav key={d} type="button" aria-label={navLabels[i]}>
                <Svg width="13" height="13" viewBox="0 0 13 13" fill="none" stroke="#d3d2d0"><path d={d} /></Svg>
              </TabNav>
            ))}
            <AddSheet type="button" aria-label="Add Sheet">
              <Svg width="12" height="14" viewBox="0 0 12 14" fill="#fff" stroke="#d3d2d0"><path d="M.5.500h6l3 3v10h-9z" /><circle cx="9.500" cy="7" r="1.800" stroke="#2a6fc0" strokeWidth="1.300" /></Svg>
            </AddSheet>
            {tabs.map((name, i) => <Tab key={name} type="button" $active={i === 0}>{name}</Tab>)}
          </TabBar>
        </Workspace>
        <Splitter>
          <SplitterHandle type="button" aria-label="Hide Sidebar">
            <Svg width="3" height="4" viewBox="0 0 3 4"><path d="M0 0l3 2-3 2z" fill="#fff" /></Svg>
          </SplitterHandle>
        </Splitter>
        <Sidebar>
          {panels.map(([icon, label]) => <ToolButton key={icon} type="button" aria-label={label}><Icon name={icon} size={15} /></ToolButton>)}
        </Sidebar>
      </Main>
      <StatusBar>
        <StatusItem $center>
          <Svg width="11" height="11" viewBox="0 0 11 11" fill="none" stroke="#aaa"><path d="M.5.500h10v10h-10zM3 .5v3.500h5v-3.500M3 10.500v-4h5v4" /></Svg>
        </StatusItem>
        <StatusItem>Sheet 1 of 5</StatusItem>
        <StatusItem>Selected: 1 row, 9 columns</StatusItem>
        <StatusItem>PageStyle_Tableau de bord</StatusItem>
        <StatusItem $center>English (USA)</StatusItem>
        <StatusItem />
        <StatusItem>
          <Svg width="19" height="12" viewBox="0 0 19 12" fill="none"><path d="M.5 3.500h11v6h-11z" stroke={BLUE} fill="#fff" /><path d="M14 1.500h5M14 11.500h5M16.500 1.500v10" stroke="#333" /></Svg>
        </StatusItem>
        <StatusItem />
        <StatusItem />
        <StatusItem $center>Average: ; Sum: 0</StatusItem>
        <ZoomControl>
          <ZoomStep type="button" aria-label="Zoom Out"><Svg width="7" height="7" viewBox="0 0 7 7" stroke="#333" strokeWidth="1.500"><path d="M0 3.500h7" /></Svg></ZoomStep>
          <ZoomSlider type="range" aria-label="Zoom" min={0} max={100} defaultValue={50} />
          <ZoomStep type="button" aria-label="Zoom In"><Svg width="7" height="7" viewBox="0 0 7 7" stroke="#333" strokeWidth="1.500"><path d="M0 3.500h7M3.500 0v7" /></Svg></ZoomStep>
        </ZoomControl>
        <StatusItem>100%</StatusItem>
      </StatusBar>
    </Window>
  );
}
